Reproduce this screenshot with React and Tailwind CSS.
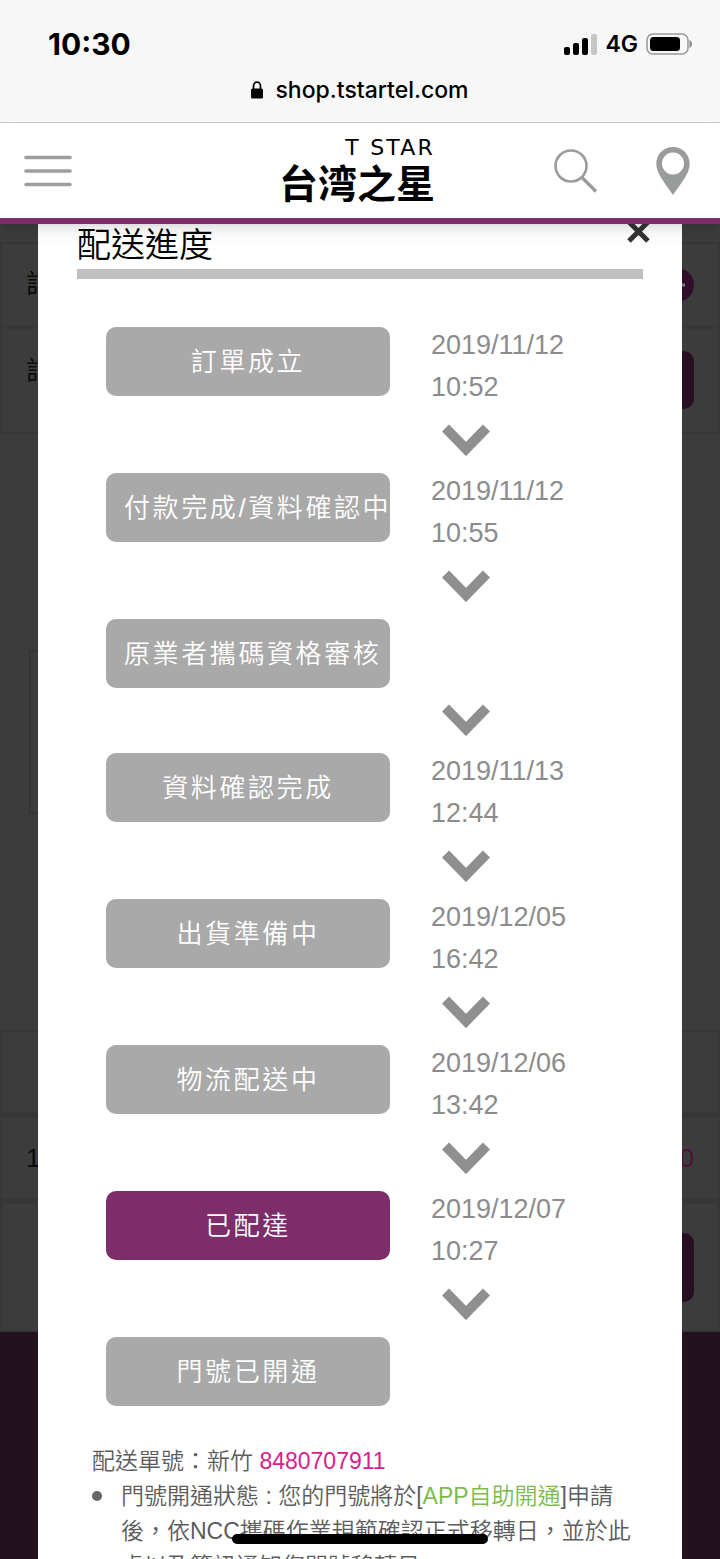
import { clsx } from 'clsx';

const steps = [
  { label: '訂單成立', date: '2019/11/12', time: '10:52' },
  { label: '付款完成/資料確認中', date: '2019/11/12', time: '10:55' },
  { label: '原業者攜碼資格審核' },
  { label: '資料確認完成', date: '2019/11/13', time: '12:44' },
  { label: '出貨準備中', date: '2019/12/05', time: '16:42' },
  { label: '物流配送中', date: '2019/12/06', time: '13:42' },
  { label: '已配達', date: '2019/12/07', time: '10:27', current: true },
  { label: '門號已開通' },
];

function StatusBar() {
  return (
    <div className="shrink-0 border-b border-[#c8c8ca] bg-[#f7f7f7] pt-6 pb-[6px] font-['Inter',sans-serif] text-black">
      <div className="flex h-10 items-center justify-between pr-7 pl-12">
        <span className="text-[30px] font-bold">10:30</span>
        <div className="flex items-center gap-2">
          <svg className="h-[21px] w-[33px]" viewBox="0 0 33 21" aria-hidden="true">
            <rect x="0" y="13" width="6" height="8" rx="2" />
            <rect x="9" y="9" width="6" height="12" rx="2" />
            <rect x="18" y="4" width="6" height="17" rx="2" />
            <rect x="27" y="0" width="6" height="21" rx="2" fill="#c6c6c6" />
          </svg>
          <span className="text-[23px] font-semibold">4G</span>
          <svg className="h-[22px] w-[46px]" viewBox="0 0 46 22" aria-hidden="true">
            <rect x="1" y="1" width="41" height="20" rx="6" fill="none" stroke="#9b9b9b" strokeWidth="1.6" />
            <rect x="4" y="4" width="30" height="14" rx="3.5" />
            <path d="M43.500 7v8c1.500-.7 2.500-2.200 2.500-4s-1-3.300-2.500-4z" fill="#8a8a8a" />
          </svg>
        </div>
      </div>
      <div className="flex h-[52px] items-center justify-center gap-3">
        <svg className="h-[18px] w-3" viewBox="0 0 12 18" aria-hidden="true">
          <path d="M2.500 8V5a3.500 3.900 0 0 1 7 0v3" fill="none" stroke="#000" strokeWidth="1.700" />
          <rect x="0" y="7.500" width="12" height="10" rx="1.500" />
        </svg>
        <span className="text-[23px] font-medium">shop.tstartel.com</span>
      </div>
    </div>
  );
}

function NavBar() {
  return (
    <header className="z-10 grid h-[101px] shrink-0 grid-cols-[1fr_auto_1fr] items-center border-b-6 border-[#7c2d6a] bg-white pr-[30px] pl-6 shadow-lg">
      <button type="button" aria-label="選單" className="w-12">
        <svg className="h-8 w-12" viewBox="0 0 48 32" stroke="#9e9e9e" strokeWidth="3.600" strokeLinecap="round">
          <path d="M2 2.500h44M2 16h44M2 29.500h44" />
        </svg>
      </button>
      <a href="#home" className="flex flex-col items-end text-black">
        <span className="font-['DejaVu_Sans',sans-serif] text-[22px] leading-5 tracking-widest">T STAR</span>
        <span className="font-['Noto_Sans_CJK_TC',sans-serif] text-[39px] leading-[46px] font-bold">台湾之星</span>
      </a>
      <div className="flex items-center justify-end gap-[58px]">
        <button type="button" aria-label="搜尋">
          <svg className="h-11 w-11" viewBox="0 0 44 44" fill="none" stroke="#9a9c9c">
            <circle cx="17" cy="17" r="15.500" strokeWidth="2.600" />
            <path d="M28 28.500l14 14" strokeWidth="3.400" />
          </svg>
        </button>
        <button type="button" aria-label="門市">
          <svg className="h-12 w-[34px]" viewBox="0 0 34 48" fill="#9a9c9c">
            <path
              fillRule="evenodd"
              d="M17 0C7.600 0 .3 7.300.3 16.800.3 26 8 35 17 48c9-13 16.700-22 16.700-31.200C33.700 7.300 26.400 0 17 0zm0 5.500a11 11 0 1 1 0 22 11 11 0 0 1 0-22z"
            />
          </svg>
        </button>
      </div>
    </header>
  );
}

// order page dimmed behind the dialog
function OrderPage() {
  return (
    <div aria-hidden="true" className="flex min-h-full flex-col bg-[#3c3c3c] pt-[18px] text-[26px] text-[#0a0a0a]">
      <div className="flex h-[85px] items-center justify-between border-2 border-[#373737] px-6">
        <span>訂</span>
        <svg className="h-[34px] w-[34px]" viewBox="0 0 34 34">
          <circle cx="17" cy="17" r="17" fill="#300d28" />
          <path d="M9 17h16" stroke="#777" strokeWidth="3" />
        </svg>
      </div>
      <div className="flex h-[107px] justify-between border-2 border-[#373737] px-6 pt-[22px]">
        <span className="leading-10">訂</span>
        <span className="h-[58px] w-40 rounded-[10px] bg-[#270f21]" />
      </div>
      <div className="mt-[216px] ml-[29px] h-[164px] w-1/2 border-2 border-[#343434]" />
      <div className="mt-[216px] h-[84px] border-2 border-[#373737]" />
      <div className="flex h-[88px] items-center justify-between border-2 border-y-4 border-[#373737] px-6">
        <span>1</span>
        <span className="text-[#4d1238]">0</span>
      </div>
      <div className="flex h-[130px] items-center justify-end border-2 border-[#373737] px-6">
        <span className="h-[69px] w-40 rounded-[10px] bg-[#270f21]" />
      </div>
      <div className="flex-1 bg-[#23121d]" />
    </div>
  );
}

function Step({ step, last }) {
  return (
    <li>
      <div className="flex gap-[41px]">
        <div
          className={clsx(
            'mt-[3px] h-[69px] w-[284px] shrink-0 overflow-hidden rounded-[10px] px-[18px] text-center text-[26px] leading-[71px] font-[350] tracking-widest whitespace-nowrap text-white',
            step.current ? 'bg-[#7c2d6a]' : 'bg-[#a9a9a9]'
          )}
        >
          {step.label}
        </div>
        {step.date && (
          <div className="text-[27px] leading-[42px] text-[#8c8c8c]">
            <p>{step.date}</p>
            <p>{step.time}</p>
          </div>
        )}
      </div>
      {!last && (
        <svg className="mt-4 mb-[14px] ml-[336px] h-8 w-12" viewBox="0 0 48 32" aria-hidden="true">
          <path d="M3.500 4L24 25 44.500 4" fill="none" stroke="#8f8f8f" strokeWidth="10" />
        </svg>
      )}
    </li>
  );
}

function ProgressDialog() {
  return (
    <section
      role="dialog"
      aria-labelledby="dialog-title"
      className="absolute inset-x-[38px] top-0 min-h-full bg-white px-[39px]"
    >
      <h1 id="dialog-title" className="border-b-10 border-[#bfbfbf] pb-[3px] text-[34px] leading-[42px] font-[350] text-black">
        配送進度
      </h1>
      <button type="button" aria-label="關閉" className="absolute -top-1 right-8">
        <svg className="h-[23px] w-[23px]" viewBox="0 0 23 23" stroke="#333" strokeWidth="5">
          <path d="M2 2l19 19M21 2L2 21" />
        </svg>
      </button>

      <ol className="mt-[45px] pl-[29px]">
        {steps.map((step, i) => (
          <Step key={step.label} step={step} last={i === steps.length - 1} />
        ))}
      </ol>

      <div className="mt-[38px] pl-[15px] text-[23px] leading-[35px] font-[350] text-[#5c5c5c]">
        <p>
          配送單號：新竹 <a href="#tracking" className="text-[#d9218a]">8480707911</a>
        </p>
        <ul>
          <li className="flex">
            <span className="mt-3 mr-[19px] h-[10px] w-[10px] shrink-0 rounded-full bg-[#666]" />
            <p>
              門號開通狀態 : 您的門號將於[<a href="#activate" className="text-[#7dbb4b]">APP自助開通</a>]申請後，依NCC攜碼作業規範確認正式移轉日，並於此處以及簡訊通知您門號移轉日
            </p>
          </li>
        </ul>
      </div>
    </section>
  );
}

export default function App() {
  return (
    <div
      lang="zh-Hant"
      className="relative flex h-screen flex-col overflow-hidden font-['Liberation_Sans','Noto_Sans_CJK_TC',sans-serif]"
    >
      <StatusBar />
      <NavBar />
      <main className="relative flex flex-1 flex-col overflow-hidden *:first:flex-1">
        <OrderPage />
        <ProgressDialog />
      </main>
      {/* home indicator */}
      <div className="absolute bottom-[15px] left-1/2 z-20 h-[10px] w-64 -translate-x-1/2 rounded-full bg-black" />
    </div>
  );
}
